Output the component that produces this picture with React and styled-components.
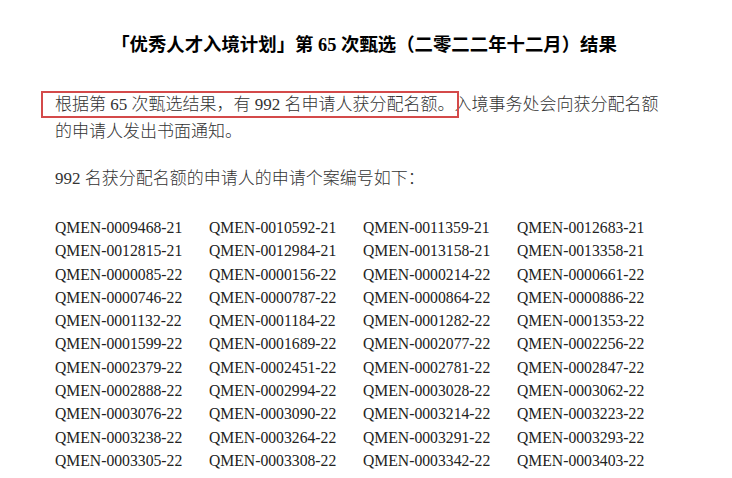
import React from 'react';
import styled, { createGlobalStyle } from 'styled-components';

const GlobalStyle = createGlobalStyle`
  body {
    margin: 0;
    background: #fff;
    font-family: "Liberation Serif", "Times New Roman", serif;
    color: #222;
  }
`;

const Page = styled.main`
  padding: 32px 55px 0;
  width: 612px;
`;

const Title = styled.h1`
  margin: 0 -6px 32px 0;
  font-size: 18.4px;
  line-height: 27px;
  font-weight: bold;
  color: #000;
  text-align: center;
  font-family: "Liberation Serif", "Noto Sans CJK SC", serif;
`;

const Para = styled.p`
  margin: 0 0 ${props => props.gap}px;
  font-size: 17px;
  line-height: 27px;
  color: #333;
  font-family: "Liberation Serif", "Noto Sans CJK SC", serif;
  font-weight: 300;
`;

const Marked = styled.span`
  position: relative;

  &:after {
    content: '';
    position: absolute;
    left: -14px;
    right: -4px;
    top: -4px;
    bottom: -4px;
    border: 2.5px solid #d44a4a;
  }
`;

const CodeGrid = styled.div`
  display: grid;
  grid-template-columns: repeat(4, 154px);
  font-size: 15.7px;
  line-height: 23.3px;
`;

const Code = styled.div`
  white-space: nowrap;
`;

const codes = [
  '0009468-21', '0010592-21', '0011359-21', '0012683-21',
  '0012815-21', '0012984-21', '0013158-21', '0013358-21',
  '0000085-22', '0000156-22', '0000214-22', '0000661-22',
  '0000746-22', '0000787-22', '0000864-22', '0000886-22',
  '0001132-22', '0001184-22', '0001282-22', '0001353-22',
  '0001599-22', '0001689-22', '0002077-22', '0002256-22',
  '0002379-22', '0002451-22', '0002781-22', '0002847-22',
  '0002888-22', '0002994-22', '0003028-22', '0003062-22',
  '0003076-22', '0003090-22', '0003214-22', '0003223-22',
  '0003238-22', '0003264-22', '0003291-22', '0003293-22',
  '0003305-22', '0003308-22', '0003342-22', '0003403-22',
];

const App = () => (
  <>
    <GlobalStyle />
    <Page>
      <Title>「优秀人才入境计划」第 65 次甄选（二零二二年十二月）结果</Title>
      <Para gap={20}>
        <Marked>根据第 65 次甄选结果，有 992 名申请人获分配名额。</Marked>入境事务处会向获分配名额的申请人发出书面通知。
      </Para>
      <Para gap={24}>992 名获分配名额的申请人的申请个案编号如下：</Para>
      <CodeGrid>
        {codes.map(code => (
          <Code key={code}>QMEN-{code}</Code>
        ))}
      </CodeGrid>
    </Page>
  </>
);

export default App;
